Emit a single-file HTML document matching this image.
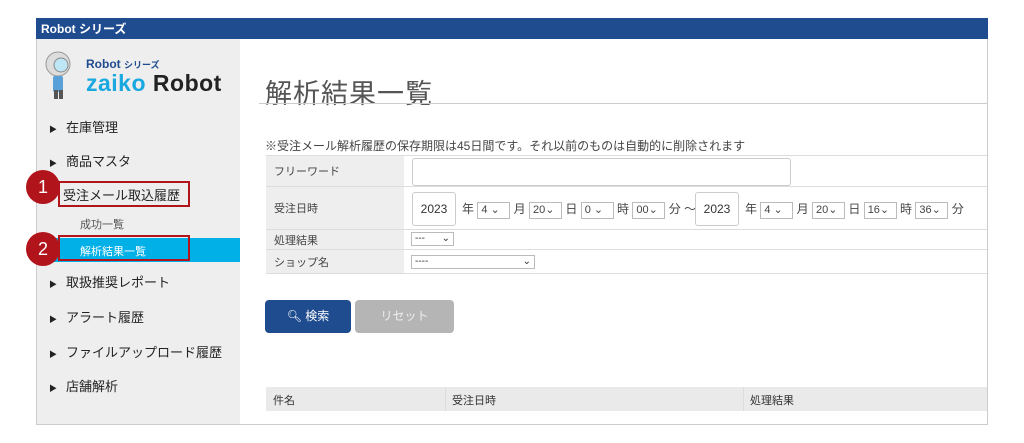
<!DOCTYPE html>
<html><head><meta charset="utf-8"><style>
*{margin:0;padding:0;box-sizing:border-box}
body{width:1024px;height:443px;background:#fff;position:relative;overflow:hidden;font-family:"Liberation Sans","Noto Sans CJK JP",sans-serif;color:#333}
.a{position:absolute}
.frame{left:36px;top:18px;width:952px;height:407px;border:1px solid #ccc}
.hdr{left:36px;top:18px;width:952px;height:21px;background:#1f4c8f;color:#fff;font-size:12px;font-weight:bold;padding:2px 5px}
.side{left:37px;top:39px;width:203px;height:385px;background:#eeeeee}
.nav{font-size:13px;color:#222}
.tri{font-size:8px;margin-right:9px}
.sel{border:1px solid #bbb;background:#fff;font-size:11px;height:17px;top:0;padding:0 3px;display:inline-block;line-height:15px}
.tx{font-size:12px;color:#444}
.lbl{background:#eee;left:266px;width:138px;font-size:11px;padding-left:8px;display:flex;align-items:center;border-bottom:1px solid #ddd;color:#444}
.row{left:404px;width:583px;border-bottom:1px solid #ddd}
.c{width:34px;height:34px;border-radius:50%;background:#b2141c;color:#fff;font-size:18px;text-align:center;line-height:34px}
.box{border:2px solid #b2141c}
</style></head><body>
<div class="a frame"></div>
<div class="a hdr">Robot シリーズ</div>
<div class="a side"></div>
<svg class="a" style="left:40px;top:50px" width="36" height="50" viewBox="0 0 36 50">
<circle cx="18" cy="14" r="12" fill="#ddd" stroke="#999"/><circle cx="21" cy="15" r="7" fill="#bfe6f5" stroke="#888"/>
<rect x="13" y="26" width="10" height="16" rx="2" fill="#5aa0d8"/><rect x="14" y="40" width="4" height="9" fill="#555"/><rect x="19" y="40" width="4" height="9" fill="#555"/></svg>
<div class="a" style="left:86px;top:57px;font-size:12px;font-weight:bold;color:#1f4c8f">Robot <span style="font-size:9px">シリーズ</span></div>
<div class="a" style="left:86px;top:70px;font-size:23px;font-weight:bold;color:#1aa8e0;letter-spacing:0.5px">zaiko <span style="color:#222">Robot</span></div>
<div class="a nav" style="left:49px;top:117px"><span class="tri">▶</span>在庫管理</div>
<div class="a nav" style="left:49px;top:151px"><span class="tri">▶</span>商品マスタ</div>
<div class="a nav" style="left:63px;top:185px">受注メール取込履歴</div>
<div class="a" style="left:80px;top:216px;font-size:11px;color:#555">成功一覧</div>
<div class="a" style="left:37px;top:238px;width:203px;height:24px;background:#00b0e6"></div>
<div class="a" style="left:80px;top:243px;font-size:11px;color:#fff">解析結果一覧</div>
<div class="a nav" style="left:49px;top:272px"><span class="tri">▶</span>取扱推奨レポート</div>
<div class="a nav" style="left:49px;top:307px"><span class="tri">▶</span>アラート履歴</div>
<div class="a nav" style="left:49px;top:342px"><span class="tri">▶</span>ファイルアップロード履歴</div>
<div class="a nav" style="left:49px;top:376px"><span class="tri">▶</span>店舗解析</div>
<div class="a box" style="left:58px;top:181px;width:132px;height:26px"></div>
<div class="a box" style="left:58px;top:235px;width:132px;height:26px"></div>
<div class="a c" style="left:26px;top:170px">1</div>
<div class="a c" style="left:26px;top:232px">2</div>
<div class="a" style="left:265px;top:72px;font-size:27px;color:#555;letter-spacing:1px">解析結果一覧</div>
<div class="a" style="left:259px;top:103px;width:728px;height:1px;background:#ccc"></div>
<div class="a" style="left:265px;top:137px;font-size:12px;color:#444">※受注メール解析履歴の保存期限は45日間です。それ以前のものは自動的に削除されます</div>
<div class="a" style="left:266px;top:155px;width:721px;height:1px;background:#ddd"></div>
<div class="a lbl" style="top:156px;height:31px">フリーワード</div>
<div class="a row" style="top:156px;height:31px"></div>
<div class="a" style="left:412px;top:158px;width:379px;height:28px;border:1px solid #ccc;border-radius:3px"></div>
<div class="a lbl" style="top:187px;height:43px">受注日時</div>
<div class="a row" style="top:187px;height:43px"></div>
<div class="a" style="left:412px;top:192px;width:44px;height:34px;border:1px solid #ccc;border-radius:3px;font-size:12px;text-align:center;line-height:32px">2023</div>
<div class="a tx" style="left:462px;top:200px;white-space:nowrap">年 <span class="sel" style="width:33px">4 ⌄</span> 月 <span class="sel" style="width:33px">20⌄</span> 日 <span class="sel" style="width:33px">0 ⌄</span> 時 <span class="sel" style="width:33px">00⌄</span> 分 ～</div>
<div class="a" style="left:695px;top:192px;width:44px;height:34px;border:1px solid #ccc;border-radius:3px;font-size:12px;text-align:center;line-height:32px">2023</div>
<div class="a tx" style="left:745px;top:200px;white-space:nowrap">年 <span class="sel" style="width:33px">4 ⌄</span> 月 <span class="sel" style="width:33px">20⌄</span> 日 <span class="sel" style="width:33px">16⌄</span> 時 <span class="sel" style="width:33px">36⌄</span> 分</div>
<div class="a lbl" style="top:230px;height:20px">処理結果</div>
<div class="a row" style="top:230px;height:20px"></div>
<div class="a sel" style="left:411px;top:232px;width:43px;height:14px;font-size:10px;line-height:12px">--- <span style="float:right">⌄</span></div>
<div class="a lbl" style="top:250px;height:24px">ショップ名</div>
<div class="a row" style="top:250px;height:24px"></div>
<div class="a sel" style="left:411px;top:255px;width:124px;height:14px;font-size:10px;line-height:12px">----<span style="float:right">⌄</span></div>
<div class="a" style="left:265px;top:300px;width:86px;height:33px;background:#1f4c8f;border-radius:4px;color:#fff;font-size:12px;text-align:center;line-height:33px">🔍︎ 検索</div>
<div class="a" style="left:355px;top:300px;width:99px;height:33px;background:#b5b5b5;border-radius:4px;color:#eee;font-size:12px;text-align:center;line-height:33px">リセット</div>
<div class="a" style="left:266px;top:387px;width:721px;height:24px;background:#eaeaea;font-size:11px"></div>
<div class="a" style="left:445px;top:387px;width:1px;height:24px;background:#ddd"></div>
<div class="a" style="left:743px;top:387px;width:1px;height:24px;background:#ddd"></div>
<div class="a" style="left:273px;top:392px;font-size:11px">件名</div>
<div class="a" style="left:452px;top:392px;font-size:11px">受注日時</div>
<div class="a" style="left:750px;top:392px;font-size:11px">処理結果</div>
</body></html>
